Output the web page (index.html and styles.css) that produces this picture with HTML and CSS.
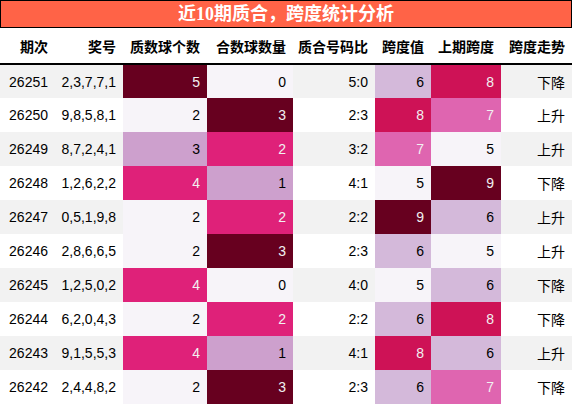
FILE: index.html
```html
<!DOCTYPE html>
<html lang="zh">
<head>
    <meta charset="UTF-8">
    <meta name="viewport" content="width=device-width, initial-scale=1.0">
    <title>质合跨度统计</title>
    <link rel="stylesheet" href="styles.css">
</head>
<body>
    <table class="stats-table">
        <caption class="stats-title">近10期质合，跨度统计分析</caption>
        <colgroup>
            <col style="width:55px">
            <col style="width:68px">
            <col style="width:84px">
            <col style="width:86px">
            <col style="width:82px">
            <col style="width:56px">
            <col style="width:70px">
            <col style="width:71px">
        </colgroup>
        <thead>
            <tr>
                <th>期次</th>
                <th>奖号</th>
                <th>质数球个数</th>
                <th>合数球数量</th>
                <th>质合号码比</th>
                <th>跨度值</th>
                <th>上期跨度</th>
                <th>跨度走势</th>
            </tr>
        </thead>
        <tbody id="stats-body">
            <!-- rows are built below -->
        </tbody>
    </table>

    <script>
        const rows = [
            ['26251', '2,3,7,7,1', 5, 0, '5:0', 6, 8, '下降'],
            ['26250', '9,8,5,8,1', 2, 3, '2:3', 8, 7, '上升'],
            ['26249', '8,7,2,4,1', 3, 2, '3:2', 7, 5, '上升'],
            ['26248', '1,2,6,2,2', 4, 1, '4:1', 5, 9, '下降'],
            ['26247', '0,5,1,9,8', 2, 2, '2:2', 9, 6, '上升'],
            ['26246', '2,8,6,6,5', 2, 3, '2:3', 6, 5, '上升'],
            ['26245', '1,2,5,0,2', 4, 0, '4:0', 5, 6, '下降'],
            ['26244', '6,2,0,4,3', 2, 2, '2:2', 6, 8, '下降'],
            ['26243', '9,1,5,5,3', 4, 1, '4:1', 8, 6, '上升'],
            ['26242', '2,4,4,8,2', 2, 3, '2:3', 6, 7, '下降']
        ];

        // PuRd colour stops
        const stops = ['#f7f4f9', '#e7e1ef', '#d4b9da', '#c994c7', '#df65b0',
                       '#e7298a', '#ce1256', '#980043', '#67001f'];

        function hexToRgb(hex) {
            return [1, 3, 5].map(i => parseInt(hex.substr(i, 2), 16));
        }

        function purd(t) {
            const pos = t * (stops.length - 1);
            const i = Math.min(Math.floor(pos), stops.length - 2);
            const f = pos - i;
            const a = hexToRgb(stops[i]);
            const b = hexToRgb(stops[i + 1]);
            return a.map((v, k) => Math.round(v + (b[k] - v) * f));
        }

        // columns that get a gradient
        const gradientCols = [2, 3, 5, 6];
        const ranges = {};
        gradientCols.forEach(c => {
            const vals = rows.map(r => r[c]);
            ranges[c] = [Math.min(...vals), Math.max(...vals)];
        });

        const body = document.getElementById('stats-body');
        rows.forEach(row => {
            const tr = document.createElement('tr');
            row.forEach((value, c) => {
                const td = document.createElement('td');
                td.textContent = value;
                if (gradientCols.includes(c)) {
                    const [min, max] = ranges[c];
                    const rgb = purd((value - min) / (max - min));
                    const lum = rgb.map(v => {
                        v = v / 255;
                        return v <= 0.03928 ? v / 12.92 : Math.pow((v + 0.055) / 1.055, 2.4);
                    });
                    const l = 0.2126 * lum[0] + 0.7152 * lum[1] + 0.0722 * lum[2];
                    td.style.backgroundColor = `rgb(${rgb.join(',')})`;
                    td.style.color = l < 0.408 ? '#f1f1f1' : '#000000';
                }
                tr.appendChild(td);
            });
            body.appendChild(tr);
        });
    </script>
</body>
</html>
```

FILE: styles.css
```css
/* General Styles */
body {
    margin: 0;
    background-color: #ffffff;
    font-family: "Liberation Sans", "Noto Sans CJK SC", sans-serif;
}

/* Table */
.stats-table {
    width: 572px;
    table-layout: fixed;
    border-collapse: collapse;
    border-spacing: 0;
}

/* Title */
.stats-title {
    background-color: #ff6347;
    color: #ffffff;
    font-family: "Liberation Serif", "Noto Sans CJK SC", serif;
    font-size: 18px;
    font-weight: bold;
    height: 26px;
    line-height: 26px;
    border: 1px solid #000000;
    text-align: center;
}

/* Header */
.stats-table th {
    height: 36px;
    padding: 0 7px 7px 0;
    font-size: 14px;
    font-weight: bold;
    color: #000000;
    text-align: right;
    vertical-align: bottom;
    white-space: nowrap;
    border-bottom: 2px solid #000000;
    box-sizing: border-box;
}

/* Body rows */
.stats-table td {
    height: 34px;
    padding: 0 7px 0 0;
    font-size: 14px;
    color: #000000;
    text-align: right;
    vertical-align: middle;
    white-space: nowrap;
    box-sizing: border-box;
}

.stats-table tbody tr:nth-child(odd) {
    background-color: #f2f2f2;
}

.stats-table tbody tr:nth-child(even) {
    background-color: #ffffff;
}
```
